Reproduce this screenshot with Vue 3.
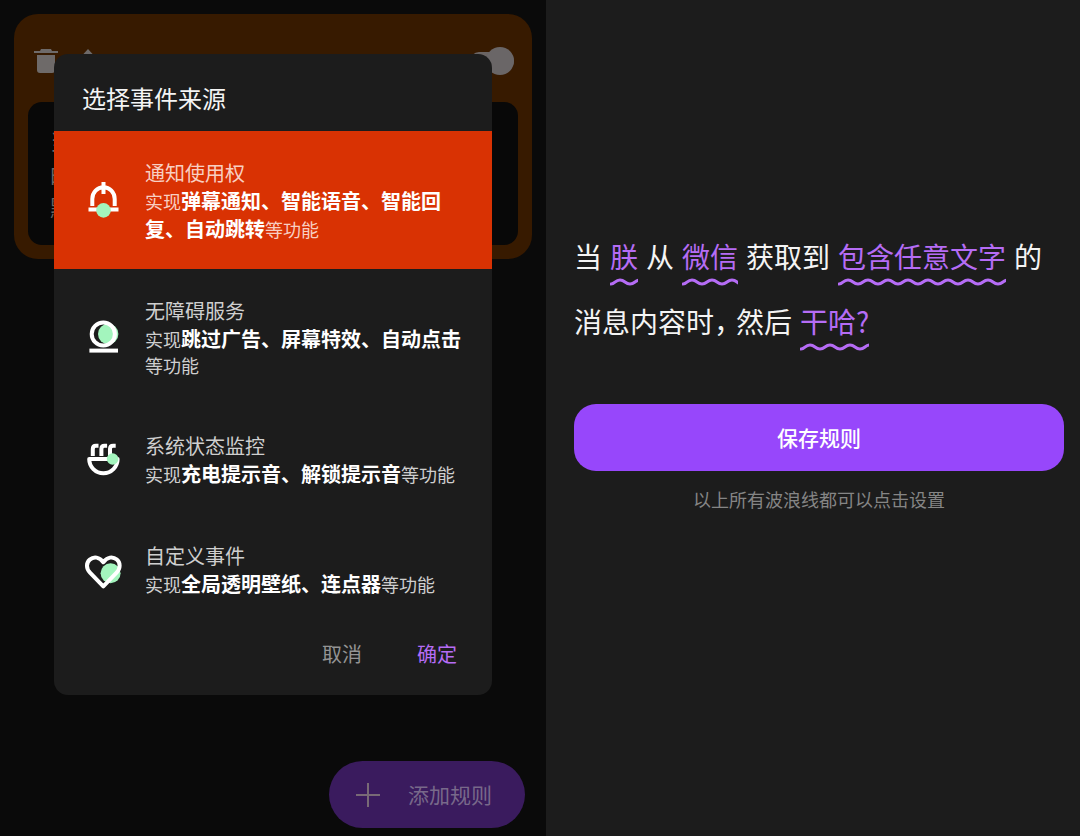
<script setup>
import { ref } from 'vue'

const selected = ref('notification')
const ruleEnabled = ref(true)

const sources = [
  { id: 'notification', name: '通知使用权', features: '弹幕通知、智能语音、智能回复、自动跳转' },
  { id: 'accessibility', name: '无障碍服务', features: '跳过广告、屏幕特效、自动点击' },
  { id: 'system', name: '系统状态监控', features: '充电提示音、解锁提示音' },
  { id: 'custom', name: '自定义事件', features: '全局透明壁纸、连点器' }
]

const sentence = [
  [
    { text: '当' },
    { text: '朕', slot: true },
    { text: '从' },
    { text: '微信', slot: true },
    { text: '获取到' },
    { text: '包含任意文字', slot: true },
    { text: '的' }
  ],
  [{ text: '消息内容时，' }, { text: '然后' }, { text: '干哈?', slot: true }]
]

// One crest every 20px, starting in a trough
const wave = 'M1 7' + Array.from({ length: 20 }, (_, i) => {
  const x = i * 20
  return `C${x + 5} 7 ${x + 5} 3 ${x + 10} 3S${x + 15} 7 ${x + 20} 7`
}).join('')
</script>

<template>
  <main class="screens">
    <section class="rules">
      <article class="rule-card">
        <header class="rule-tools">
          <button class="tool" type="button" aria-label="删除">
            <svg viewBox="0 0 24 24" width="24" height="24"><path d="M0 2h6l1-2h10l1 2h6v2H0zM3 6h18v15q0 3-3 3H6q-3 0-3-3z" /></svg>
          </button>
          <button class="tool" type="button" aria-label="上移">
            <svg viewBox="0 0 24 24" width="24" height="24"><path d="M12 0 23 12h-7v12H8V12H1z" /></svg>
          </button>
          <input v-model="ruleEnabled" class="switch" type="checkbox" role="switch" aria-label="启用规则" />
        </header>
        <div class="rule-text">
          <div>当</div>
          <div>的</div>
          <div>默</div>
        </div>
      </article>

      <button class="add" type="button">
        <svg viewBox="0 0 24 24" width="24" height="24" aria-hidden="true"><path d="M12 0v24M0 12h24" /></svg>
        <span>添加规则</span>
      </button>

      <div class="dialog" role="dialog" aria-labelledby="dialog-title">
        <h2 id="dialog-title">选择事件来源</h2>
        <button
          v-for="s in sources"
          :key="s.id"
          type="button"
          class="source"
          :class="{ active: selected === s.id }"
          :aria-pressed="selected === s.id"
          @click="selected = s.id"
        >
          <svg class="icon" viewBox="0 0 40 40" width="40" height="40" aria-hidden="true">
            <template v-if="s.id === 'notification'">
              <path class="line" d="M8.3 26V19a11.2 11.7 0 0 1 22.4 0V26M19.5 2V14M4.5 29.4H34.5" />
              <circle class="dot" cx="19.5" cy="30.4" r="7.3" />
            </template>
            <template v-else-if="s.id === 'accessibility'">
              <circle class="dot" cx="24.2" cy="17" r="10.2" />
              <circle class="line" cx="19.3" cy="17" r="11.6" />
              <path class="line" d="M5.4 33.6H34" />
            </template>
            <template v-else-if="s.id === 'system'">
              <path class="line" d="M5.2 20H33.6A14.2 14.2 0 0 1 5.2 20ZM8.8 17V10Q8.8 6.8 12 6.8H14.5M17.4 17V10Q17.4 6.8 20.6 6.8H23.1M26 17V10Q26 6.8 29.2 6.8H31.7" />
              <circle class="dot" cx="28.6" cy="20" r="5.8" />
            </template>
            <template v-else>
              <circle class="dot" cx="26.6" cy="24.3" r="10" />
              <path class="line" d="M19.3 37.4 6 23.6C2 19.4 2 13.8 5.8 10.6C9.9 7.1 15.4 8 19.3 13.2C23.2 8 28.7 7.1 32.8 10.6C36.6 13.8 36.6 19.4 32.6 23.6Z" />
            </template>
          </svg>
          <span class="copy">
            <span class="name">{{ s.name }}</span>
            <span class="desc">实现<b>{{ s.features }}</b>等功能</span>
          </span>
        </button>
        <footer class="actions">
          <button type="button">取消</button>
          <button type="button" class="confirm">确定</button>
        </footer>
      </div>
    </section>

    <section class="editor">
      <div class="sentence">
        <div v-for="(line, i) in sentence" :key="i" class="row">
          <template v-for="part in line" :key="part.text">
            <button v-if="part.slot" type="button" class="slot">
              {{ part.text }}
              <svg class="wave" height="10" aria-hidden="true"><path :d="wave" /></svg>
            </button>
            <span v-else :class="{ clause: part.text.endsWith('，') }">{{ part.text }}</span>
          </template>
        </div>
      </div>
      <button class="save" type="button">保存规则</button>
      <p class="hint">以上所有波浪线都可以点击设置</p>
    </section>
  </main>
</template>

<style>
body {
  margin: 0;
  background: #1c1c1c;
}
</style>

<style scoped>
* {
  box-sizing: border-box;
}

button {
  margin: 0;
  padding: 0;
  border: 0;
  background: none;
  color: inherit;
  font: inherit;
  cursor: pointer;
}

.screens {
  display: grid;
  grid-template-columns: 546fr 534fr;
  min-height: 100vh;
  font-family: "Noto Sans CJK SC", sans-serif;
  color: #f4f4f4;
}

.rules {
  position: relative;
  padding: 14px;
  background: #0a0a0a;
}

.rule-card {
  padding: 0 14px 14px;
  border-radius: 24px;
  background: #371a00;
}

.rule-tools {
  display: flex;
  align-items: center;
  gap: 18px;
  height: 88px;
  padding: 6px 4px 0 6px;
}

.tool {
  display: flex;
}

.tool svg {
  fill: #6e6a69;
}

.switch {
  position: relative;
  appearance: none;
  width: 44px;
  height: 18px;
  margin: 0 0 0 auto;
  border-radius: 9px;
  background: #6a6463;
}

.switch::after {
  content: "";
  position: absolute;
  top: -5px;
  right: 0;
  width: 28px;
  height: 28px;
  border-radius: 50%;
  background: #6a6667;
}

.rule-text {
  padding: 22px;
  border-radius: 14px;
  background: #080808;
  color: #6a6a6a;
  font-size: 22px;
  line-height: 33px;
}

.add {
  position: absolute;
  right: 21px;
  bottom: 8px;
  display: flex;
  align-items: center;
  gap: 28px;
  height: 67px;
  padding: 0 33px 0 27px;
  border-radius: 34px;
  background: #3a1b5e;
  color: #78698a;
  font-size: 21px;
}

.add span {
  padding-bottom: 2px;
}

.add svg {
  fill: none;
  stroke: #786a76;
  stroke-width: 2;
}

.dialog {
  position: absolute;
  top: 54px;
  left: 54px;
  right: 54px;
  border-radius: 14px;
  background: #1c1c1c;
}

h2 {
  margin: 0;
  padding: 26px 28px 15px;
  font-size: 24px;
  line-height: 36px;
  font-weight: 400;
}

.source {
  display: flex;
  align-items: center;
  gap: 21px;
  width: 100%;
  padding: 28px 22px 26px 30px;
  text-align: left;
}

.source.active {
  background: #d93203;
}

.icon {
  flex: none;
  margin-bottom: 2px;
}

.line {
  fill: none;
  stroke: #fff;
  stroke-width: 4;
  stroke-linejoin: round;
}

.dot {
  fill: #a3f5bd;
}

.copy {
  flex: 1;
  min-width: 0;
}

.name,
.desc {
  display: block;
  color: #cfcfcf;
}

.name {
  font-size: 20px;
  line-height: 28px;
}

.desc {
  font-size: 18px;
  line-height: 25px;
}

.active .name,
.active .desc {
  color: #f8cfc2;
}

.desc b {
  color: #fff;
  font-size: 20px;
  line-height: 28px;
}

.actions {
  display: flex;
  justify-content: flex-end;
  gap: 55px;
  padding: 15px 35px 26px;
  color: #949494;
  font-size: 20px;
  line-height: 30px;
}

.confirm {
  color: #b56cf5;
}

.editor {
  padding: 224px 16px 28px 28px;
  background: #1c1c1c;
}

.row {
  display: flex;
  flex-wrap: wrap;
  gap: 0 8px;
  font-size: 28px;
  line-height: 65px;
}

.clause {
  font-feature-settings: "halt";
}

.slot {
  position: relative;
  color: #b56cf5;
}

.wave {
  position: absolute;
  left: 0;
  bottom: 2px;
  width: 100%;
}

.wave path {
  fill: none;
  stroke: #b56cf5;
  stroke-width: 3;
  stroke-linecap: round;
}

.save {
  display: block;
  width: 100%;
  height: 67px;
  margin-top: 50px;
  padding-bottom: 2px;
  border-radius: 22px;
  background: #9747fb;
  color: #fff;
  font-size: 21px;
  font-weight: 500;
}

.hint {
  margin: 15px 0 0;
  color: #858585;
  font-size: 18px;
  line-height: 26px;
  text-align: center;
}
</style>
